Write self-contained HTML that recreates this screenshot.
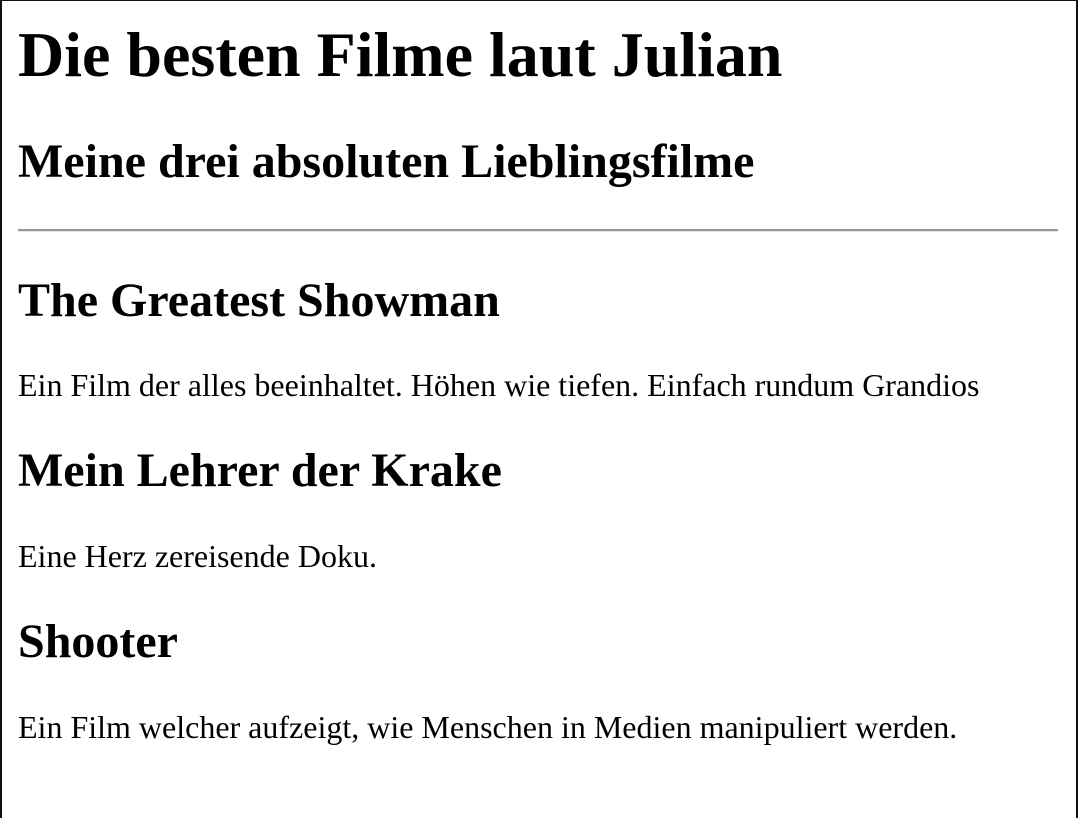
<!DOCTYPE html>
<html><head><meta charset="utf-8"><style>
html,body{margin:0;padding:0;background:#fff;height:818px;overflow:hidden;}
body{width:1078px;position:relative;font-family:"Liberation Serif",serif;color:#000;}
.frame{position:absolute;left:0;top:0;width:1074px;height:840px;border-left:2px solid #111;border-right:2px solid #111;border-top:1px solid #111;}
.t{position:absolute;left:18px;margin:0;line-height:1;white-space:nowrap;}
.h1{font-size:64px;font-weight:bold;}
.h2{font-size:48px;font-weight:bold;}
.p{font-size:32px;}
.hr{position:absolute;left:18px;width:1040px;top:229px;height:0;border-top:2px solid #9a9a9a;border-bottom:1px solid #e6e6e6;}
</style></head><body>
<div class="frame"></div>
<div class="t h1" style="top:23px">Die besten Filme laut Julian</div>
<div class="t h2" style="top:138px">Meine drei absoluten Lieblingsfilme</div>
<div class="hr"></div>
<div class="t h2" style="top:277px">The Greatest Showman</div>
<div class="t p" style="top:369px">Ein Film der alles beeinhaltet. Höhen wie tiefen. Einfach rundum Grandios</div>
<div class="t h2" style="top:447px">Mein Lehrer der Krake</div>
<div class="t p" style="top:540px">Eine Herz zereisende Doku.</div>
<div class="t h2" style="top:618px">Shooter</div>
<div class="t p" style="top:711px">Ein Film welcher aufzeigt, wie Menschen in Medien manipuliert werden.</div>
</body></html>
